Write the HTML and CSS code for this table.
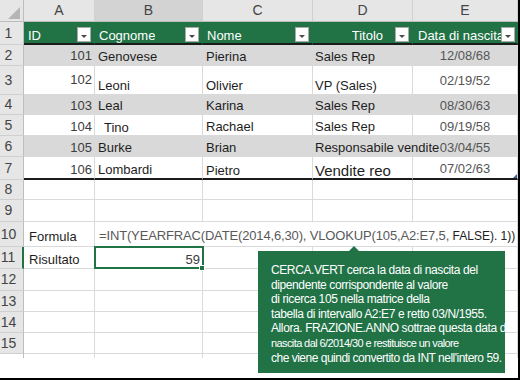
FILE: index.html
```html
<!DOCTYPE html>
<html>
<head>
<meta charset="utf-8">
<link rel="stylesheet" href="styles.css">
</head>
<body>
<div class="frame">
  <div class="sheet">
    <div class="row r-head">
      <div class="corner"></div>
      <div>A</div>
      <div class="sel">B</div>
      <div>C</div>
      <div>D</div>
      <div>E</div>
    </div>
    <div class="row h23 thead">
      <div class="rowh">1</div>
      <div class="th"><span class="tt">ID</span><span class="fb"></span></div>
      <div class="th"><span class="tt">Cognome</span><span class="fb"></span></div>
      <div class="th"><span class="tt">Nome</span><span class="fb"></span></div>
      <div class="th right"><span class="tt">Titolo</span><span class="fb"></span></div>
      <div class="th wide"><span class="tt">Data di nascita</span><span class="fb"></span></div>
    </div>
    <div class="row h21 band">
      <div class="rowh">2</div>
      <div class="num up1">101</div>
      <div>Genovese</div>
      <div>Pierina</div>
      <div class="d">Sales Rep</div>
      <div class="date up1">12/08/68</div>
    </div>
    <div class="row h29">
      <div class="rowh">3</div>
      <div class="num up7">102</div>
      <div>Leoni</div>
      <div>Olivier</div>
      <div class="d">VP (Sales)</div>
      <div class="date up5">02/19/52</div>
    </div>
    <div class="row h20 band">
      <div class="rowh">4</div>
      <div class="num">103</div>
      <div>Leal</div>
      <div>Karina</div>
      <div class="d">Sales Rep</div>
      <div class="date">08/30/63</div>
    </div>
    <div class="row h21">
      <div class="rowh">5</div>
      <div class="num">104</div>
      <div class="indent dn">Tino</div>
      <div>Rachael</div>
      <div class="d">Sales Rep</div>
      <div class="date">09/19/58</div>
    </div>
    <div class="row h21 band">
      <div class="rowh">6</div>
      <div class="num">105</div>
      <div>Burke</div>
      <div>Brian</div>
      <div class="d">Responsabile vendite</div>
      <div class="date">03/04/55</div>
    </div>
    <div class="row h23 tend">
      <div class="rowh">7</div>
      <div class="num">106</div>
      <div>Lombardi</div>
      <div class="dn">Pietro</div>
      <div class="d big dn">Vendite reo</div>
      <div class="date up1 corner-mark">07/02/63</div>
    </div>
    <div class="row h20">
      <div class="rowh">8</div>
      <div></div><div></div><div></div><div></div><div></div>
    </div>
    <div class="row h22">
      <div class="rowh">9</div>
      <div></div><div></div><div></div><div></div><div></div>
    </div>
    <div class="row h25">
      <div class="rowh">10</div>
      <div class="lbl up1">Formula</div>
      <div class="fx up1"><span>=INT(YEARFRAC(DATE(2014,6,30), VLOOKUP(105,A2:E7,5, <span class="fx-end">FALSE). 1))</span></span></div>
    </div>
    <div class="row h22">
      <div class="rowh cur">11</div>
      <div class="lbl">Risultato</div>
      <div class="num selcell">59</div>
      <div></div><div></div><div></div>
    </div>
    <div class="row h22">
      <div class="rowh">12</div>
      <div></div><div></div><div></div><div></div><div></div>
    </div>
    <div class="row h21">
      <div class="rowh">13</div>
      <div></div><div></div><div></div><div></div><div></div>
    </div>
    <div class="row h21">
      <div class="rowh">14</div>
      <div></div><div></div><div></div><div></div><div></div>
    </div>
    <div class="row h21">
      <div class="rowh">15</div>
      <div></div><div></div><div></div><div></div><div></div>
    </div>
    <div class="row h4 stub">
      <div class="rowh"></div>
      <div></div><div></div><div></div><div></div><div></div>
    </div>
  </div>
  <div class="tip">
    <div class="tip-body">
      <div class="tl">CERCA.VERT cerca la data di nascita del</div>
      <div class="tl">dipendente corrispondente al valore</div>
      <div class="tl">di ricerca 105 nella matrice della</div>
      <div class="tl">tabella di intervallo A2:E7 e retto 03/N/1955.</div>
      <div class="tl">Allora. FRAZIONE.ANNO sottrae questa data di</div>
      <div class="tl sm">nascita dal 6/2014/30 e restituisce un valore</div>
      <div class="tl last">che viene quindi convertito da INT nell'intero 59.</div>
    </div>
  </div>
</div>
</body>
</html>
```
FILE: styles.css
```css
body {
  margin: 0;
  background: #fff;
  font-family: "Liberation Sans", Arial, sans-serif;
}

.frame {
  position: relative;
  width: 518px;
  height: 378px;
  border-right: 2px solid #000;
  border-bottom: 2px solid #000;
  overflow: hidden;
  background: #fff;
}

.row {
  display: grid;
  grid-template-columns: 24px 71px 108px 110px 100px 105px;
}

.h4 { height: 4px; }
.h20 { height: 20px; }
.h21 { height: 21px; }
.h22 { height: 22px; }
.h23 { height: 23px; }
.h25 { height: 25px; }
.h29 { height: 29px; }

.row > div {
  box-sizing: border-box;
  border-right: 1px solid #dadada;
  border-bottom: 1px solid #dadada;
  display: flex;
  align-items: flex-end;
  white-space: nowrap;
  font-size: 13px;
  line-height: 15px;
  padding: 0 3px 1px 3px;
  color: #1e1e1e;
  min-width: 0;
}

/* column header row */
.r-head { height: 22px; }
.row.r-head > div {
  background: #e6e6e6;
  border-right: 1px solid #d0d0d0;
  border-bottom: 1px solid #bdbdbd;
  justify-content: center;
  align-items: center;
  font-size: 14px;
  color: #444;
  padding: 0;
}
.row.r-head > .sel { background: #d3d3d3; }
.row.r-head > .corner {
  position: relative;
  border-right: 1px solid #bdbdbd;
}
.corner::after {
  content: "";
  position: absolute;
  right: 3px;
  bottom: 2px;
  width: 0;
  height: 0;
  border-style: solid;
  border-width: 0 0 12px 12px;
  border-color: transparent transparent #b5b5b5 transparent;
}

/* row headers */
.row > .rowh {
  background: #e6e6e6;
  border-right: 1px solid #bdbdbd;
  border-bottom: 1px solid #cfcfcf;
  color: #444;
  font-size: 14px;
  justify-content: center;
  align-items: center;
  padding: 0 6px 0 0;
}
.row > .rowh.cur { border-right: 2px solid #217346; }
.stub > .rowh { background: #fff; }
.row.stub > div { border-bottom: 0; }

/* table header */
.row > .th {
  background: #217346;
  color: #fff;
  border-right: 1px solid #217346;
  border-bottom: 2px solid #1b1b1b;
  justify-content: space-between;
  padding: 0 3px 0 4px;
}
.row > .th.right { justify-content: flex-end; }
.th.right .tt { margin-right: 12px; }
.row > .th.wide { padding-left: 5px; padding-right: 2px; }
.tt {
  overflow: hidden;
  flex: 0 1 auto;
  min-width: 0;
}
.fb {
  flex: none;
  align-self: flex-end;
  margin-bottom: 1px;
  width: 14px;
  height: 15px;
  box-sizing: border-box;
  background: #fff;
  border: 1px solid #a9a9a9;
  position: relative;
}
.fb::after {
  content: "";
  position: absolute;
  left: 3px;
  top: 7px;
  border-left: 3px solid transparent;
  border-right: 3px solid transparent;
  border-top: 3px solid #4a4a4a;
}

/* data */
.band { background: #d9d9d9; }
.row.band > div { border-right-color: #d9d9d9; }
.row.band > .rowh { border-right-color: #bdbdbd; }

.row > .num {
  justify-content: flex-end;
  padding-right: 2px;
  color: #3c3c3c;
}
.row > .date {
  justify-content: center;
  color: #555;
}
.row > .d { padding-left: 2px; }
.row > .indent { padding-left: 9px; }
.row > .big { font-size: 15px; }
.row > .up1 { padding-bottom: 2px; }
.row > .up5 { padding-bottom: 6px; }
.row > .up7 { padding-bottom: 7px; }
.row > .dn { padding-bottom: 0; }

.row.tend > div { border-bottom: 2px solid #1b1b1b; }
.row.tend > .rowh { border-bottom: 1px solid #cfcfcf; }
.row > .corner-mark { position: relative; }
.corner-mark::after {
  content: "";
  position: absolute;
  right: 0;
  bottom: 0;
  width: 0;
  height: 0;
  border-style: solid;
  border-width: 0 0 4px 4px;
  border-color: transparent transparent #3a62a8 transparent;
}

.row > .lbl { padding-left: 5px; }
.row > .fx {
  grid-column: span 4;
  padding-left: 4px;
  color: #595959;
  letter-spacing: -0.15px;
}
.fx-end {
  color: #222;
  font-size: 12px;
  letter-spacing: 0;
}

.row > .selcell { position: relative; }
.selcell::before {
  content: "";
  position: absolute;
  left: -1px;
  top: -1px;
  right: -2px;
  bottom: -1px;
  border: 2px solid #217346;
}
.selcell::after {
  content: "";
  position: absolute;
  right: -3px;
  bottom: -3px;
  width: 6px;
  height: 6px;
  box-sizing: border-box;
  background: #217346;
  border: 1px solid #fff;
}

/* tooltip */
.tip {
  position: absolute;
  left: 258px;
  top: 251px;
  width: 247px;
  height: 122px;
  background: #217346;
  color: #fff;
}
.tip::before {
  content: "";
  position: absolute;
  left: 91px;
  top: -5px;
  border-left: 5px solid transparent;
  border-right: 5px solid transparent;
  border-bottom: 5px solid #217346;
}
.tip-body {
  height: 100%;
  box-sizing: border-box;
  overflow: hidden;
  padding: 12px 0 0 13px;
}
.tl {
  white-space: nowrap;
  font-size: 12px;
  line-height: 14.6px;
  letter-spacing: -0.4px;
}
.tl.sm {
  font-size: 11px;
  letter-spacing: -0.6px;
}
.tl.last { letter-spacing: -0.5px; }
```
